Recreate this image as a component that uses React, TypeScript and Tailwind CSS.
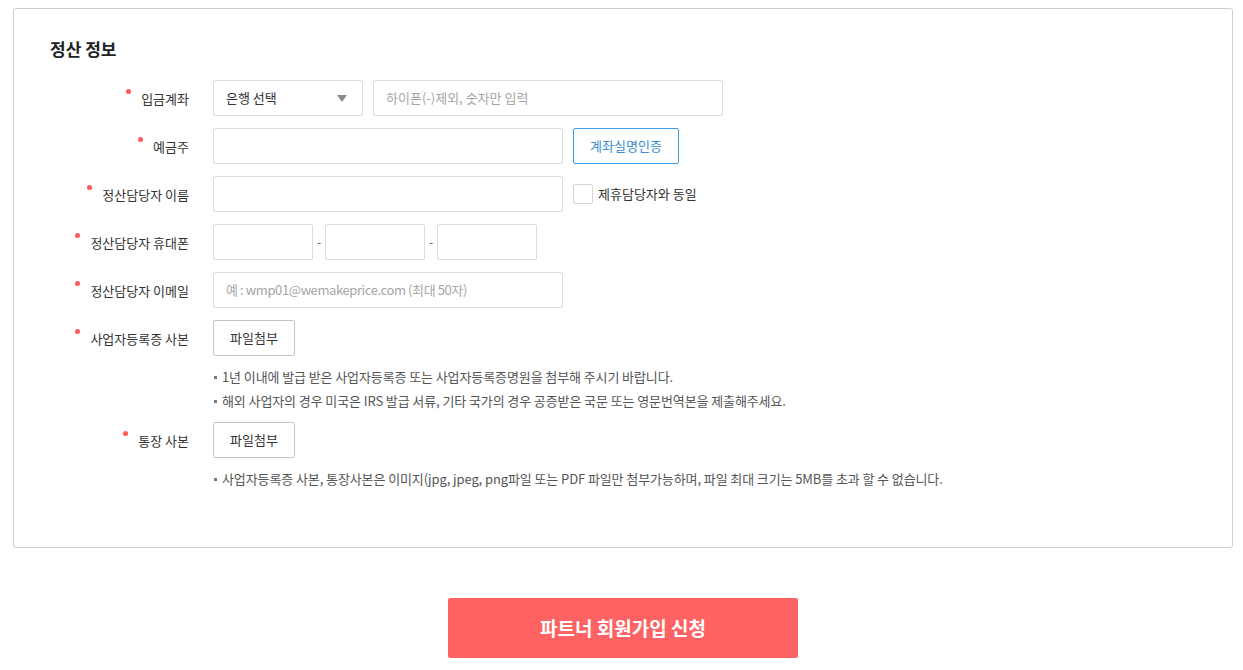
const font = "font-['Noto_Sans_CJK_KR','Noto_Sans',sans-serif]";

function Label({ text }: { text: string }) {
  return (
    <div className="w-[139px] h-[36px] flex items-center justify-end shrink-0">
      <span className="relative text-[13px] text-[#333] leading-none">
        <span className="absolute left-[-15px] top-[-3px] w-[5px] h-[5px] rounded-full bg-[#ff5a5a]"></span>
        {text}
      </span>
    </div>
  );
}

function TextBox({ width, placeholder, tight }: { width: string; placeholder?: string; tight?: boolean }) {
  return (
    <div className={`${width} h-[36px] border border-[#dcdcdc] rounded-[2px] bg-white flex items-center px-[12px] text-[13px] text-[#a6a6a6] ${tight ? 'tracking-[-0.4px]' : ''}`}>
      {placeholder}
    </div>
  );
}

function Note({ text }: { text: string }) {
  return (
    <div className="flex items-center h-[24px] text-[13px] text-[#555] tracking-[-0.1px]">
      <span className="w-[3px] h-[3px] bg-[#777] mr-[5px] ml-[1px]"></span>
      {text}
    </div>
  );
}

export default function App() {
  return (
    <div className={`${font} bg-white min-h-screen pt-[8px]`}>
      <div className="ml-[13px] w-[1220px]">
        <section className="border border-[#cfcfcf] rounded-[3px] pl-[36px] pt-[28px] pb-[56px]">
          <h2 className="text-[17px] font-bold text-[#222] leading-[24px]">정산 정보</h2>

          <div className="mt-[19px] flex flex-col gap-[12px]">
            <div className="flex gap-[24px]">
              <Label text="입금계좌" />
              <div className="flex gap-[10px]">
                <div className="w-[150px] h-[36px] border border-[#dcdcdc] rounded-[2px] flex items-center justify-between pl-[12px] pr-[15px] text-[13px] text-[#333]">
                  은행 선택
                  <svg width="10" height="7" viewBox="0 0 10 7"><path d="M0 0h10L5 7z" fill="#8a8a8a" /></svg>
                </div>
                <TextBox width="w-[350px]" placeholder="하이픈(-)제외, 숫자만 입력" />
              </div>
            </div>

            <div className="flex gap-[24px]">
              <Label text="예금주" />
              <div className="flex gap-[10px]">
                <TextBox width="w-[350px]" />
                <button className="w-[106px] h-[36px] border border-[#3a9de5] rounded-[2px] text-[13px] text-[#3a8fd0] bg-white">계좌실명인증</button>
              </div>
            </div>

            <div className="flex gap-[24px]">
              <Label text="정산담당자 이름" />
              <div className="flex gap-[10px] items-center">
                <TextBox width="w-[350px]" />
                <span className="w-[20px] h-[20px] border border-[#d5d5d5] rounded-[2px] bg-white"></span>
                <span className="text-[13px] text-[#333] ml-[-5px]">제휴담당자와 동일</span>
              </div>
            </div>

            <div className="flex gap-[24px]">
              <Label text="정산담당자 휴대폰" />
              <div className="flex items-center">
                <TextBox width="w-[100px]" />
                <span className="w-[12px] text-center text-[12px] text-[#555]">-</span>
                <TextBox width="w-[100px]" />
                <span className="w-[12px] text-center text-[12px] text-[#555]">-</span>
                <TextBox width="w-[100px]" />
              </div>
            </div>

            <div className="flex gap-[24px]">
              <Label text="정산담당자 이메일" />
              <TextBox width="w-[350px]" placeholder="예 : wmp01@wemakeprice.com (최대 50자)" tight />
            </div>

            <div className="flex gap-[24px]">
              <Label text="사업자등록증 사본" />
              <div>
                <button className="w-[82px] h-[36px] border border-[#c4c4c4] rounded-[2px] text-[13px] text-[#333] bg-white">파일첨부</button>
                <div className="mt-[9px]">
                  <Note text="1년 이내에 발급 받은 사업자등록증 또는 사업자등록증명원을 첨부해 주시기 바랍니다." />
                  <Note text="해외 사업자의 경우 미국은 IRS 발급 서류, 기타 국가의 경우 공증받은 국문 또는 영문번역본을 제출해주세요." />
                </div>
              </div>
            </div>

            <div className="flex gap-[24px] mt-[-3px]">
              <Label text="통장 사본" />
              <div>
                <button className="w-[82px] h-[36px] border border-[#c4c4c4] rounded-[2px] text-[13px] text-[#333] bg-white">파일첨부</button>
                <div className="mt-[9px]">
                  <Note text="사업자등록증 사본, 통장사본은 이미지(jpg, jpeg, png파일 또는 PDF 파일만 첨부가능하며, 파일 최대 크기는 5MB를 초과 할 수 없습니다." />
                </div>
              </div>
            </div>
          </div>
        </section>

        <div className="flex justify-center mt-[50px]">
          <button className="w-[350px] h-[60px] bg-[#ff6262] rounded-[2px] text-white text-[19px] font-bold">파트너 회원가입 신청</button>
        </div>
      </div>
    </div>
  );
}
